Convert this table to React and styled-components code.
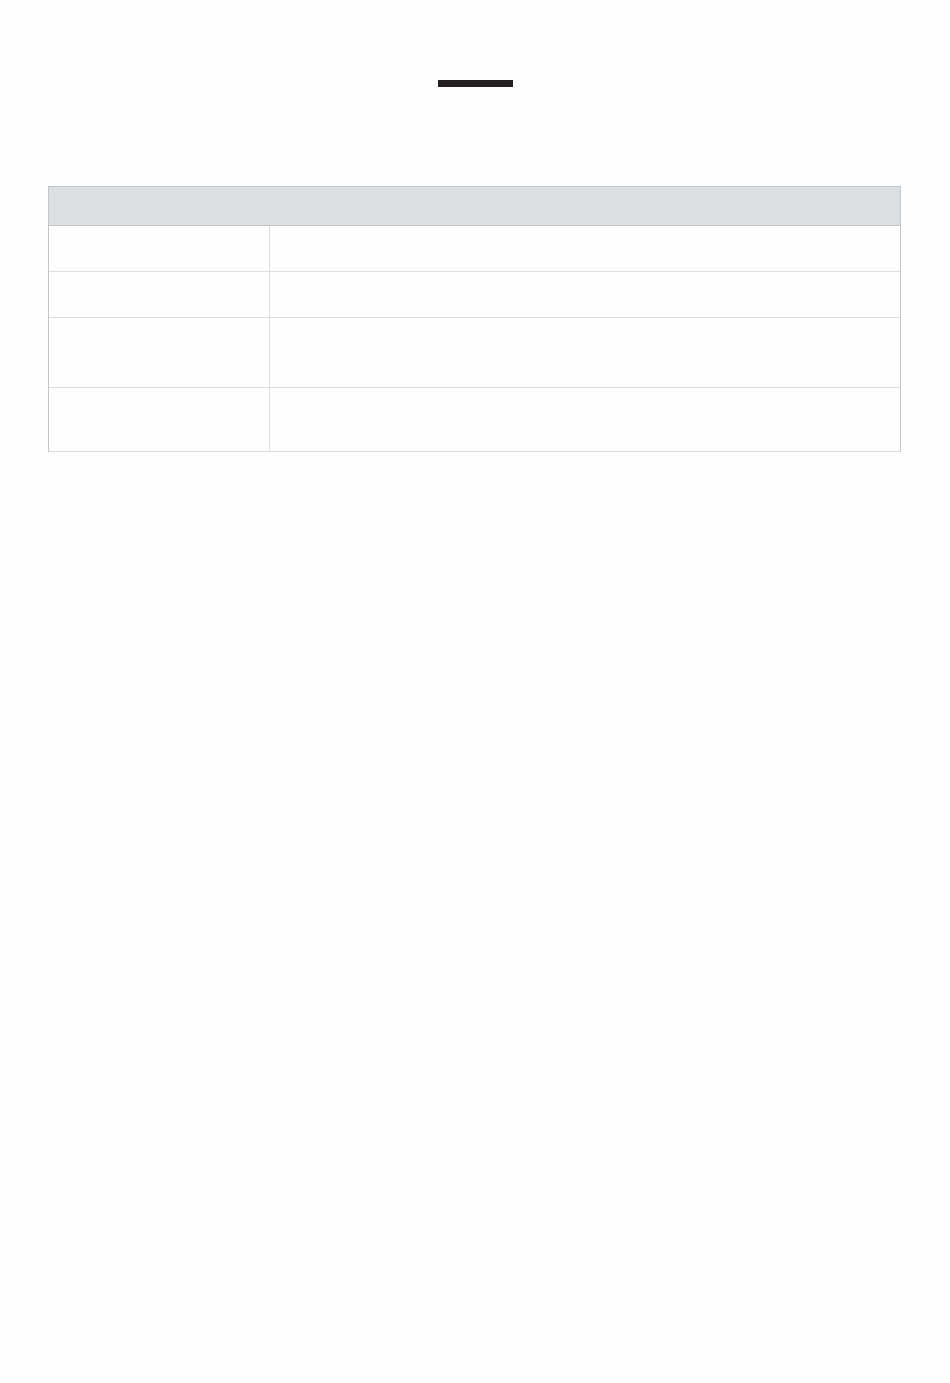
import React from 'react';
import styled, { createGlobalStyle } from 'styled-components';

const GlobalStyle = createGlobalStyle`
    html, body {
        margin: 0;
        padding: 0;
        background: #fefefe;
        font-family: "Liberation Sans", Arial, sans-serif;
    }
`;

const Page = styled.div`
    width: 950px;
    min-height: 1383px;
    box-sizing: border-box;
    padding: 80px 48px 0;
    display: flex;
    flex-direction: column;
`;

const TitleBar = styled.div`
    align-self: center;
    width: 75px;
    height: 7px;
    background: #231f20;
`;

const Table = styled.div`
    margin-top: 99px;
    width: 853px;
    box-sizing: border-box;
    border-left: 1px solid #c4c4c4;
    border-right: 1px solid #c4c4c4;
`;

const HeaderRow = styled.div`
    height: 40px;
    box-sizing: border-box;
    margin: 0 -1px;
    background: #dcdfe2;
    border: 1px solid #c3c6c9;
`;

const Row = styled.div`
    display: grid;
    grid-template-columns: 221px 1fr;
    height: ${({ height }) => height}px;
    box-sizing: border-box;
    border-bottom: 1px solid #dddddd;
`;

const LabelCell = styled.div`
    border-right: 1px solid #dddddd;
`;

const ValueCell = styled.div``;

const rows = [46, 46, 70, 64];

export default function App() {
    return (
        <>
            <GlobalStyle />
            <Page>
                <TitleBar />
                <Table>
                    <HeaderRow />
                    {rows.map((h, i) => (
                        <Row key={i} height={h}>
                            <LabelCell />
                            <ValueCell />
                        </Row>
                    ))}
                </Table>
            </Page>
        </>
    );
}
